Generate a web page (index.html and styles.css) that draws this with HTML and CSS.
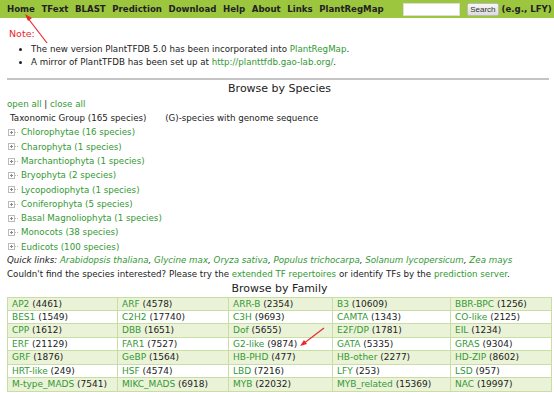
FILE: index.html
```html
<!DOCTYPE html>
<html>
<head lang="en">
    <meta charset="UTF-8">
    <title>PlantTFDB</title>
    <link rel="stylesheet" href="styles.css">
</head>
<body>
<div id="nav">
    <a href="#">Home</a>
    <a href="#">TFext</a>
    <a href="#">BLAST</a>
    <a href="#">Prediction</a>
    <a href="#">Download</a>
    <a href="#">Help</a>
    <a href="#">About</a>
    <a href="#">Links</a>
    <a href="#">PlantRegMap</a>
    <form class="search">
        <input type="text">
        <button type="button">Search</button>
        <b>(e.g., LFY)</b>
    </form>
</div>
<div id="main">
    <div class="note">Note:</div>
    <ul class="news">
        <li>The new version PlantTFDB 5.0 has been incorporated into <a href="#">PlantRegMap</a>.</li>
        <li>A mirror of PlantTFDB has been set up at <a href="#">http://planttfdb.gao-lab.org/</a>.</li>
    </ul>
    <hr>
    <h2>Browse by Species</h2>
    <div class="line"><a href="#">open all</a> | <a href="#">close all</a></div>
    <div class="line tax">Taxonomic Group (165 species) <span class="gap"></span>(G)-species with genome sequence</div>
    <ul class="tree">
        <li><i></i><a href="#">Chlorophytae (16 species)</a></li>
        <li><i></i><a href="#">Charophyta (1 species)</a></li>
        <li><i></i><a href="#">Marchantiophyta (1 species)</a></li>
        <li><i></i><a href="#">Bryophyta (2 species)</a></li>
        <li><i></i><a href="#">Lycopodiophyta (1 species)</a></li>
        <li><i></i><a href="#">Coniferophyta (5 species)</a></li>
        <li><i></i><a href="#">Basal Magnoliophyta (1 species)</a></li>
        <li><i></i><a href="#">Monocots (38 species)</a></li>
        <li><i></i><a href="#">Eudicots (100 species)</a></li>
    </ul>
    <div class="line quick">Quick links: <a href="#">Arabidopsis thaliana</a>, <a href="#">Glycine max</a>, <a href="#">Oryza sativa</a>, <a href="#">Populus trichocarpa</a>, <a href="#">Solanum lycopersicum</a>, <a href="#">Zea mays</a></div>
    <div class="line">Couldn't find the species interested? Please try the <a href="#">extended TF repertoires</a> or identify TFs by the <a href="#">prediction server</a>.</div>
    <h2 class="fam">Browse by Family</h2>
    <table class="family">
        <tr><td><a href="#">AP2</a> (4461)</td><td><a href="#">ARF</a> (4578)</td><td><a href="#">ARR-B</a> (2354)</td><td><a href="#">B3</a> (10609)</td><td><a href="#">BBR-BPC</a> (1256)</td></tr>
        <tr><td><a href="#">BES1</a> (1549)</td><td><a href="#">C2H2</a> (17740)</td><td><a href="#">C3H</a> (9693)</td><td><a href="#">CAMTA</a> (1343)</td><td><a href="#">CO-like</a> (2125)</td></tr>
        <tr><td><a href="#">CPP</a> (1612)</td><td><a href="#">DBB</a> (1651)</td><td><a href="#">Dof</a> (5655)</td><td><a href="#">E2F/DP</a> (1781)</td><td><a href="#">EIL</a> (1234)</td></tr>
        <tr><td><a href="#">ERF</a> (21129)</td><td><a href="#">FAR1</a> (7527)</td><td><a href="#">G2-like</a> (9874)</td><td><a href="#">GATA</a> (5335)</td><td><a href="#">GRAS</a> (9304)</td></tr>
        <tr><td><a href="#">GRF</a> (1876)</td><td><a href="#">GeBP</a> (1564)</td><td><a href="#">HB-PHD</a> (477)</td><td><a href="#">HB-other</a> (2277)</td><td><a href="#">HD-ZIP</a> (8602)</td></tr>
        <tr><td><a href="#">HRT-like</a> (249)</td><td><a href="#">HSF</a> (4574)</td><td><a href="#">LBD</a> (7216)</td><td><a href="#">LFY</a> (253)</td><td><a href="#">LSD</a> (957)</td></tr>
        <tr><td><a href="#">M-type_MADS</a> (7541)</td><td><a href="#">MIKC_MADS</a> (6918)</td><td><a href="#">MYB</a> (22032)</td><td><a href="#">MYB_related</a> (15369)</td><td><a href="#">NAC</a> (19997)</td></tr>
    </table>
</div>
<svg class="mark mark1" width="40" height="36" viewBox="0 0 40 36">
    <line x1="25" y1="30" x2="5" y2="4" stroke="#e8282b" stroke-width="1.2"/>
    <polygon points="3,1 10,5 6,8" fill="#e8282b"/>
</svg>
<svg class="mark mark2" width="34" height="24" viewBox="0 0 34 24">
    <line x1="27" y1="2" x2="6" y2="18" stroke="#e8282b" stroke-width="1.2"/>
    <polygon points="3,20 7,14 10,18" fill="#e8282b"/>
</svg>
</body>
</html>
```

FILE: styles.css
```css
body{margin:0;padding:0;font-family:"DejaVu Sans",Verdana,sans-serif;font-size:8.7px;color:#222;background:#fff;}
a{color:#339933;text-decoration:none;}

#nav{height:18px;background:#9dc63f;display:flex;align-items:center;padding:0 7px;gap:6.6px;white-space:nowrap;}
#nav a{color:#222;font-weight:bold;font-size:8.6px;}
#nav .search{display:flex;align-items:center;margin:0 0 0 13px;flex-shrink:0;}
#nav .search input{width:55px;height:11px;border:1px solid #ddd;padding:0;margin:0 7px 0 0;}
#nav .search button{height:13px;padding:0 2px;font-family:"Liberation Sans",Arial,sans-serif;font-size:8px;color:#333;background:linear-gradient(#f7f7f7,#dcdcdc);border:1px solid #bbb;border-radius:2px;margin-right:3px;}
#nav .search b{font-size:8.6px;}

#main{padding:0 2px 0 7px;}
.note{color:#e8282b;margin:9px 0 0 2px;line-height:14px;font-size:9.5px;}
.news{margin:2px 0 0;padding:0 0 0 24px;line-height:13.4px;}
.news li{list-style:disc;}
hr{border:0;border-top:2px solid #c4c4c4;margin:8px 3px 0 0;}
h2{font-size:11px;font-weight:normal;text-align:center;margin:0;line-height:16px;padding-top:1px;}
.line{line-height:14.3px;}
.tax{padding-left:3px;}
.tax .gap{display:inline-block;width:16px;}
.tree{margin:0;padding:0 0 0 1px;line-height:14.3px;}
.tree li{list-style:none;display:flex;align-items:center;}
.tree i{display:inline-block;width:7px;height:7px;margin-right:6px;position:relative;background:
    linear-gradient(#888,#888) center/3px 1px no-repeat,
    linear-gradient(#888,#888) center/1px 3px no-repeat;border:1px solid #bbb;box-sizing:border-box;}
.tree i:after{content:"";position:absolute;left:6px;top:2px;width:3px;border-top:1px dotted #bbb;}
.quick{font-style:italic;margin-top:-1px;}
h2.fam{padding-top:0;line-height:14px;}
.family{border-collapse:collapse;width:545px;margin-top:1px;}
.family td{border:1px solid #c9dea3;padding:0 0 0 4px;line-height:12.4px;height:12.4px;white-space:nowrap;font-size:9px;}
.family tr:nth-child(odd) td{background:#eaf3d7;}
.family td:nth-child(1){width:105px;}
.family td:nth-child(2){width:106px;}
.family td:nth-child(3){width:99px;}
.family td:nth-child(4){width:113px;}

.mark{position:absolute;}
.mark1{left:22px;top:13px;}
.mark2{left:297px;top:326px;}
```
